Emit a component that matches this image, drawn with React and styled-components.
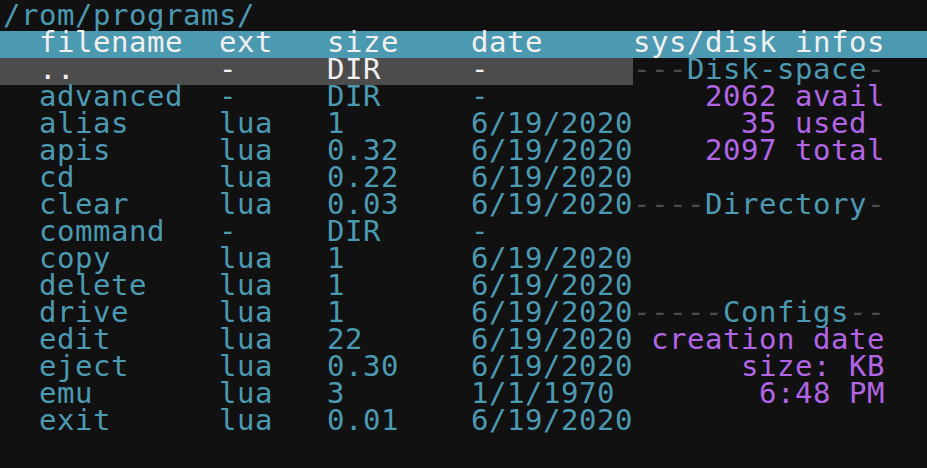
import React from "react";
import styled, { createGlobalStyle } from "styled-components";

const C = {
  bg: "#111111",
  cyan: "#4C99B2",
  gray: "#4C4C4C",
  purple: "#B266E5",
  white: "#F0F0F0",
};

const Global = createGlobalStyle`
  html, body { margin: 0; padding: 0; background: ${C.bg}; }
  body { overflow: hidden; }
`;

const Terminal = styled.div`
  width: 927px;
  height: 468px;
  padding-top: 4px;
  box-sizing: border-box;
  background: ${C.bg};
  font-family: "DejaVu Sans Mono", "Liberation Mono", monospace;
  font-size: 29px;
  letter-spacing: 0.54px;
  color: ${C.cyan};
  display: flex;
  flex-direction: column;
`;

const Line = styled.div`
  height: 27px;
  display: flex;
  background: ${(p) => p.$bg || "transparent"};
  color: ${(p) => p.$fg || C.cyan};
`;

const Text = styled.span`
  display: block;
  line-height: 22px;
  padding-bottom: 5px;
  white-space: pre;
`;

const PathText = styled(Text)`
  padding-left: 3px;
`;

const Main = styled.div`
  width: 633px;
  flex: none;
  display: grid;
  grid-template-columns: 39px 180px 108px 144px 162px;
  background: ${(p) => p.$bg || "transparent"};
  color: ${(p) => p.$fg || "inherit"};
`;

const Side = styled.div`
  width: 288px;
  flex: none;
  display: flex;
`;

const Seg = styled(Text)`
  color: ${(p) => p.$c};
`;

const files = [
  ["..", "-", "DIR", "-"],
  ["advanced", "-", "DIR", "-"],
  ["alias", "lua", "1", "6/19/2020"],
  ["apis", "lua", "0.32", "6/19/2020"],
  ["cd", "lua", "0.22", "6/19/2020"],
  ["clear", "lua", "0.03", "6/19/2020"],
  ["command", "-", "DIR", "-"],
  ["copy", "lua", "1", "6/19/2020"],
  ["delete", "lua", "1", "6/19/2020"],
  ["drive", "lua", "1", "6/19/2020"],
  ["edit", "lua", "22", "6/19/2020"],
  ["eject", "lua", "0.30", "6/19/2020"],
  ["emu", "lua", "3", "1/1/1970"],
  ["exit", "lua", "0.01", "6/19/2020"],
];

const side = [
  [["---", C.gray], ["Disk-space", C.cyan], ["-", C.gray]],
  [["    2062 avail", C.purple]],
  [["      35 used ", C.purple]],
  [["    2097 total", C.purple]],
  [],
  [["----", C.gray], ["Directory", C.cyan], ["-", C.gray]],
  [],
  [],
  [],
  [["-----", C.gray], ["Configs", C.cyan], ["--", C.gray]],
  [[" creation date", C.purple]],
  [["      size: KB", C.purple]],
  [["       6:48 PM", C.purple]],
  [],
];

function Cells({ cols }) {
  return (
    <>
      <Text />
      {cols.map((c, i) => (
        <Text key={i}>{c}</Text>
      ))}
    </>
  );
}

export default function App() {
  return (
    <>
      <Global />
      <Terminal>
        <Line>
          <PathText>/rom/programs/</PathText>
        </Line>
        <Line $bg={C.cyan} $fg={C.white}>
          <Main>
            <Cells cols={["filename", "ext", "size", "date"]} />
          </Main>
          <Side>
            <Text>sys/disk infos</Text>
          </Side>
        </Line>
        {files.map((f, i) => (
          <Line key={i}>
            <Main
              $bg={i === 0 ? C.gray : undefined}
              $fg={i === 0 ? C.white : undefined}
            >
              <Cells cols={f} />
            </Main>
            <Side>
              {side[i].map(([t, c], j) => (
                <Seg key={j} $c={c}>
                  {t}
                </Seg>
              ))}
            </Side>
          </Line>
        ))}
      </Terminal>
    </>
  );
}
